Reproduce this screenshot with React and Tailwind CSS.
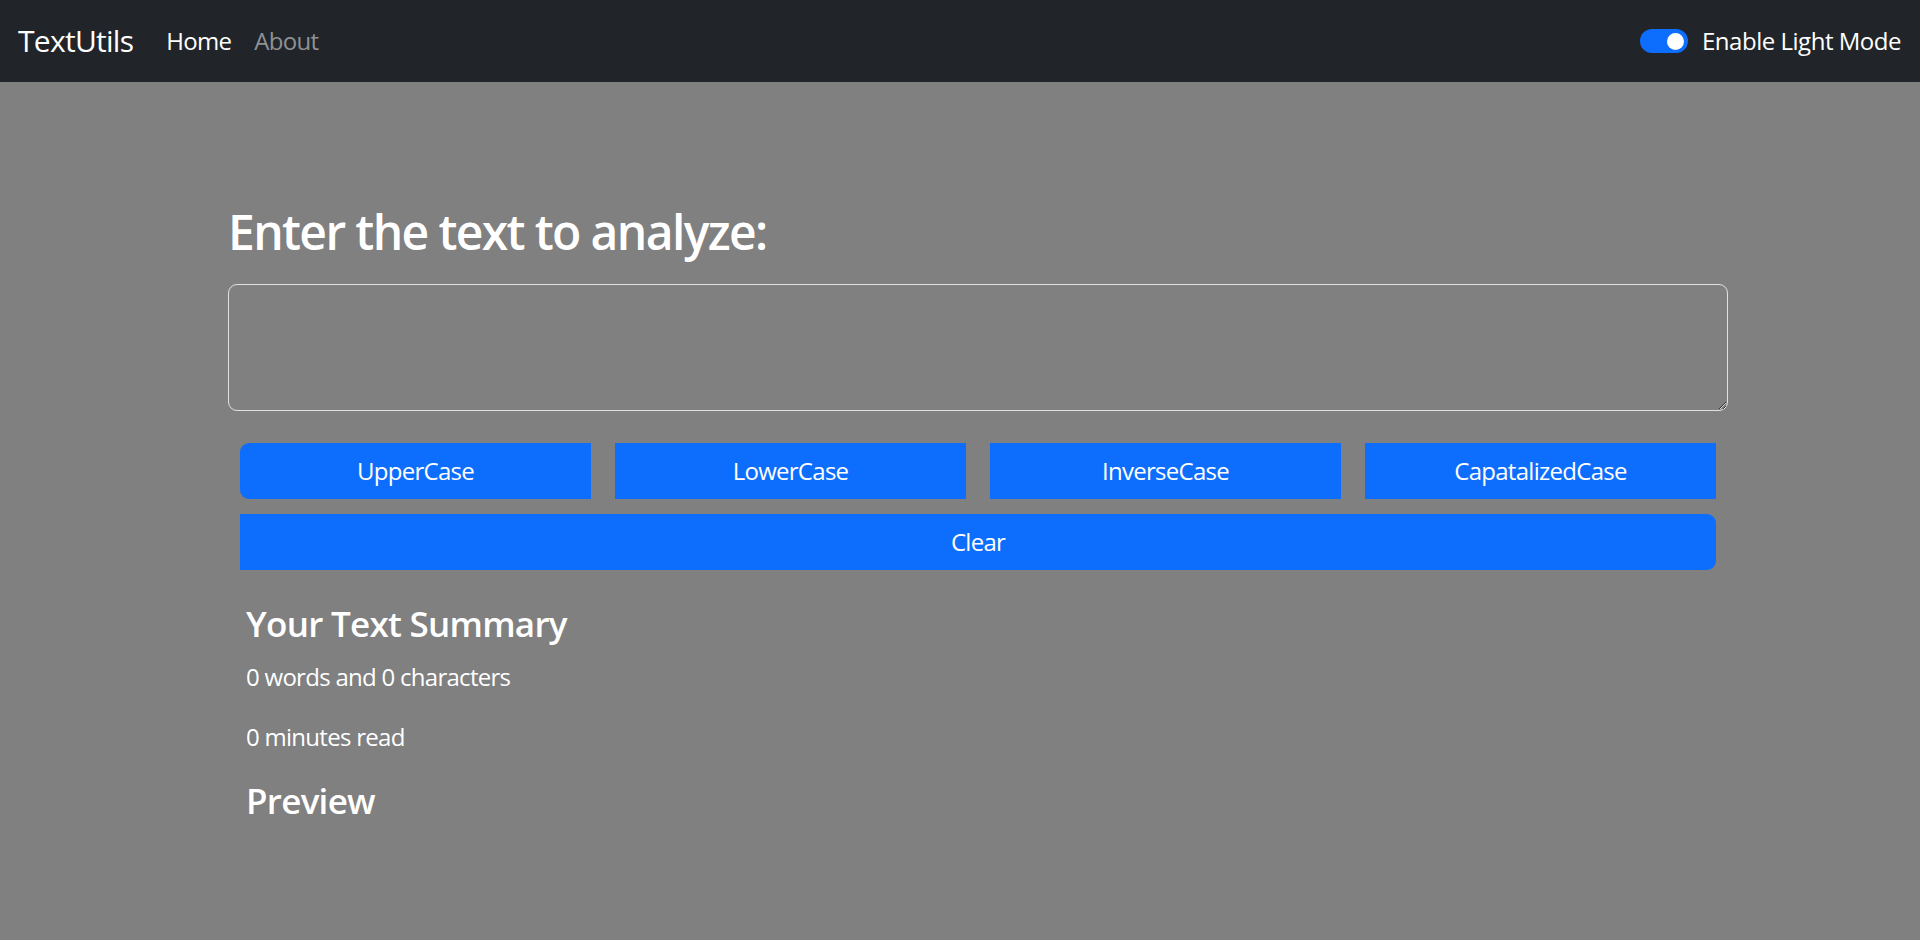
import React, { useState } from "react";

const buttons = ["UpperCase", "LowerCase", "InverseCase", "CapatalizedCase"];

const Navbar = () => (
	<nav className="h-[82px] bg-[#212529] flex items-center justify-between pl-[18px] pr-[19px]">
		<div className="flex items-center">
			<span className="text-[30px] leading-[36px] text-white mr-[33px]">TextUtils</span>
			<a className="text-[24px] leading-[36px] text-white mr-[23px]">Home</a>
			<a className="text-[24px] leading-[36px] text-[#8f9194]">About</a>
		</div>
		<div className="flex items-center">
			{/* switch */}
			<div className="w-[48px] h-[24px] rounded-full bg-[#0d6efd] flex items-center justify-end pr-[4px] mr-[14px]">
				<div className="w-[17px] h-[17px] rounded-full bg-white" />
			</div>
			<span className="text-[24px] leading-[36px] text-white tracking-[-0.02em]">Enable Light Mode</span>
		</div>
	</nav>
);

export default function App() {
	const [text, setText] = useState("");

	return (
		<div className="min-h-[940px] bg-[#808080] font-['Open_Sans',sans-serif] tracking-[-0.045em]">
			<Navbar />
			<div className="ml-[228px] w-[1500px] pt-[121px]">
				<h1 className="text-[48px] leading-[58px] font-semibold text-white tracking-[-0.034em]">
					Enter the text to analyze:
				</h1>
				<textarea
					value={text}
					onChange={(e) => setText(e.target.value)}
					className="block w-full h-[127px] mt-[23px] bg-transparent border border-[#dee2e6] rounded-[9px] px-[18px] py-[9px] text-[24px] text-white outline-none"
				/>

				<div className="px-[12px] mt-[32px]">
					<div className="grid grid-cols-4 gap-[24px]">
						{buttons.map((b, i) => (
							<button
								key={b}
								className={`h-[56px] bg-[#0d6efd] text-white text-[24px] ${i === 0 ? "rounded-l-[9px]" : ""}`}
							>
								{b}
							</button>
						))}
					</div>
					<button className="w-full h-[56px] mt-[15px] bg-[#0d6efd] text-white text-[24px] rounded-r-[9px]">
						Clear
					</button>
				</div>

				<div className="px-[18px] text-white">
					<h2 className="text-[35px] leading-[43px] font-semibold mt-[32px]">Your Text Summary</h2>
					<p className="text-[24px] leading-[36px] mt-[14px]">0 words and 0 characters</p>
					<p className="text-[24px] leading-[36px] mt-[24px]">0 minutes read</p>
					<h2 className="text-[35px] leading-[43px] font-semibold mt-[24px]">Preview</h2>
				</div>
			</div>
		</div>
	);
}
